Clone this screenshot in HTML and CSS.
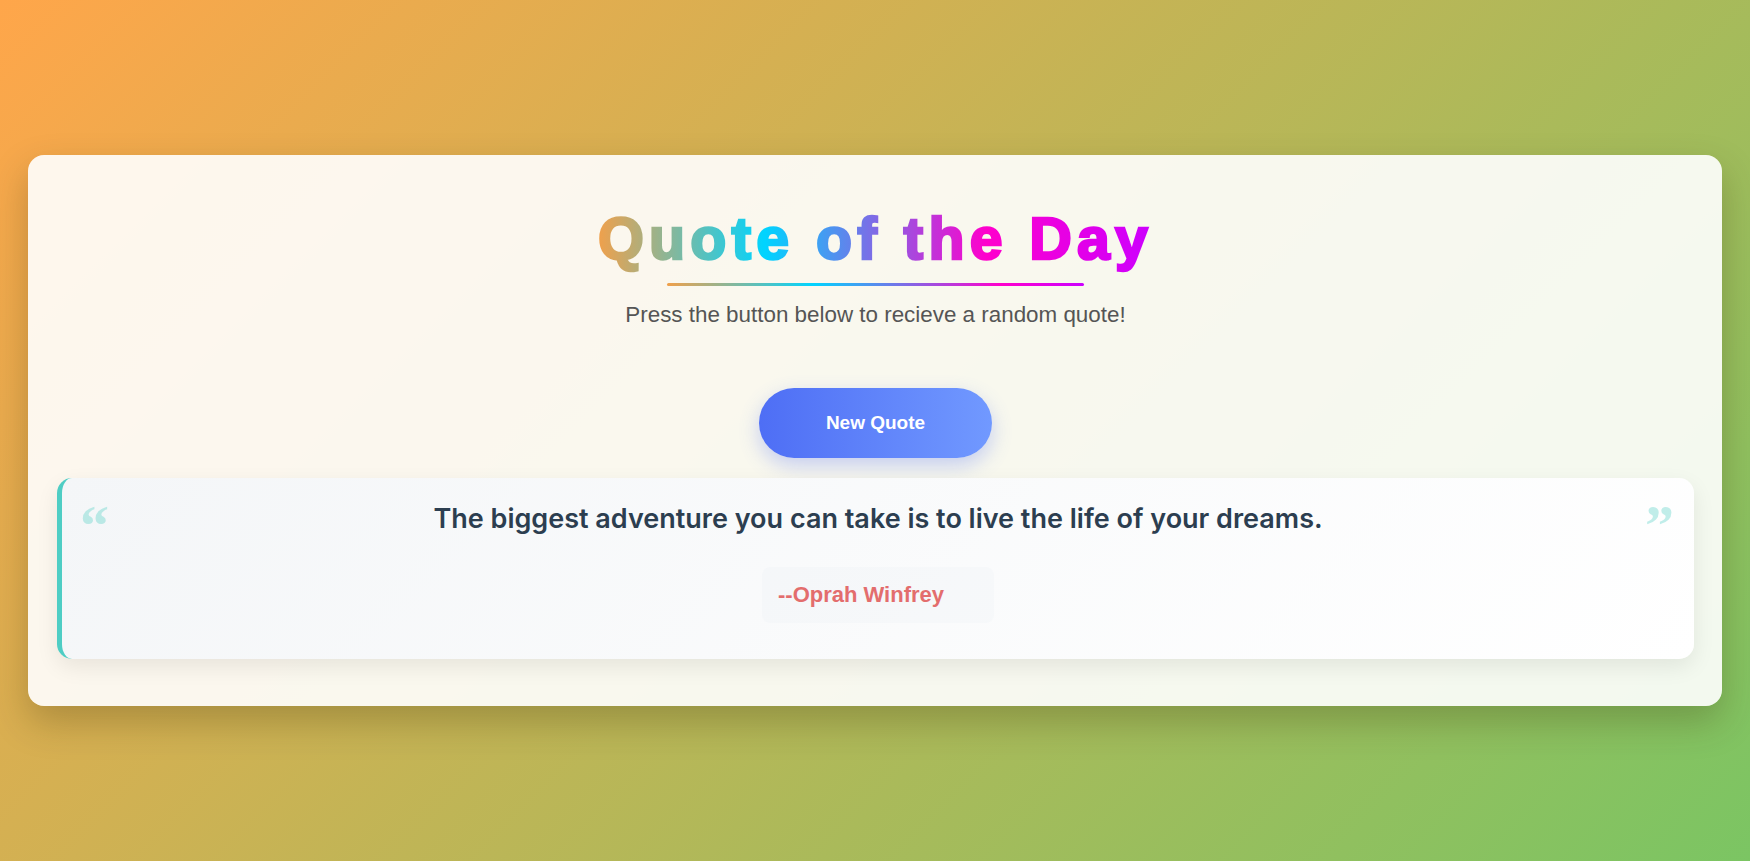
FILE: index.html
```html
<!DOCTYPE html>
<html lang="en">
<head>
<meta charset="utf-8">
<title>Quote of the Day</title>
<link rel="stylesheet" href="styles.css">
</head>
<body>
  <main class="card">
    <header class="header">
      <h1 class="title">Quote of the Day</h1>
      <p class="subtitle">Press the button below to recieve a random quote!</p>
    </header>
    <div class="actions">
      <button class="btn" type="button">New Quote</button>
    </div>
    <section class="quote-box">
      <p class="quote-text">The biggest adventure you can take is to live the life of your dreams.</p>
      <div class="author-row">
        <span class="author">--Oprah Winfrey</span>
      </div>
    </section>
  </main>
</body>
</html>
```

FILE: styles.css
```css
* {
  box-sizing: border-box;
}

html, body {
  margin: 0;
  height: 100%;
}

body {
  min-height: 100vh;
  display: flex;
  align-items: center;
  justify-content: center;
  padding: 0 28px;
  background: linear-gradient(135deg, #ffa64a 0%, #7bc563 100%);
  font-family: "Liberation Sans", Arial, sans-serif;
}

.card {
  width: 100%;
  background: rgba(255, 255, 255, 0.9);
  border-radius: 16px;
  padding: 50px 28px 47px 29px;
  box-shadow: 0 16px 36px rgba(60, 50, 10, 0.28);
}

.header {
  display: flex;
  flex-direction: column;
  align-items: center;
}

.title {
  margin: 0;
  font-size: 59px;
  font-weight: 700;
  letter-spacing: 5.2px;
  line-height: normal;
  background: linear-gradient(90deg, #f0a04b 0%, #00d4ff 30%, #ff00cc 70%, #cc00ff 100%);
  -webkit-background-clip: text;
  background-clip: text;
  color: transparent;
  -webkit-text-stroke: 2.5px transparent;
}

.title::after {
  content: "";
  display: block;
  width: 75%;
  height: 3px;
  margin: 10px auto 0;
  border-radius: 2px;
  background: linear-gradient(90deg, #f0a04b 0%, #00d4ff 35%, #ff00cc 80%, #cc00ff 100%);
}

.subtitle {
  margin: 16px 0 0;
  font-size: 22.4px;
  color: #555;
}

.actions {
  display: flex;
  justify-content: center;
  margin-top: 60px;
}

.btn {
  border: none;
  border-radius: 999px;
  padding: 24px 67px;
  font-family: "Liberation Sans", Arial, sans-serif;
  font-size: 19px;
  font-weight: 700;
  color: #fff;
  background: linear-gradient(90deg, #4e6ef5 0%, #7199ff 100%);
  box-shadow: 0 8px 20px rgba(78, 110, 245, 0.3);
  cursor: pointer;
}

.quote-box {
  position: relative;
  margin-top: 20px;
  padding: 24px 60px 36px;
  border-left: 5px solid #4ecdc4;
  border-radius: 15px;
  background: linear-gradient(135deg, #f4f6f8 0%, #ffffff 100%);
  box-shadow: 0 8px 22px rgba(0, 0, 0, 0.08);
  text-align: center;
}

.quote-box::before,
.quote-box::after {
  position: absolute;
  top: 19px;
  font-family: "Liberation Serif", "Times New Roman", serif;
  font-weight: 700;
  font-size: 58px;
  line-height: 1;
  color: rgba(78, 205, 196, 0.35);
}

.quote-box::before {
  content: "\201C";
  left: 18px;
}

.quote-box::after {
  content: "\201D";
  right: 20px;
}

.quote-text {
  margin: 0;
  font-family: Inter, "Liberation Sans", sans-serif;
  font-size: 27px;
  font-weight: 600;
  color: #2c3e50;
}

.author-row {
  display: flex;
  justify-content: center;
  margin-top: 32px;
}

.author {
  display: inline-block;
  padding: 15px 50px 15px 16px;
  border-radius: 8px;
  background: rgba(225, 232, 240, 0.12);
  font-size: 22px;
  font-weight: 700;
  color: #e36d6d;
}
```
